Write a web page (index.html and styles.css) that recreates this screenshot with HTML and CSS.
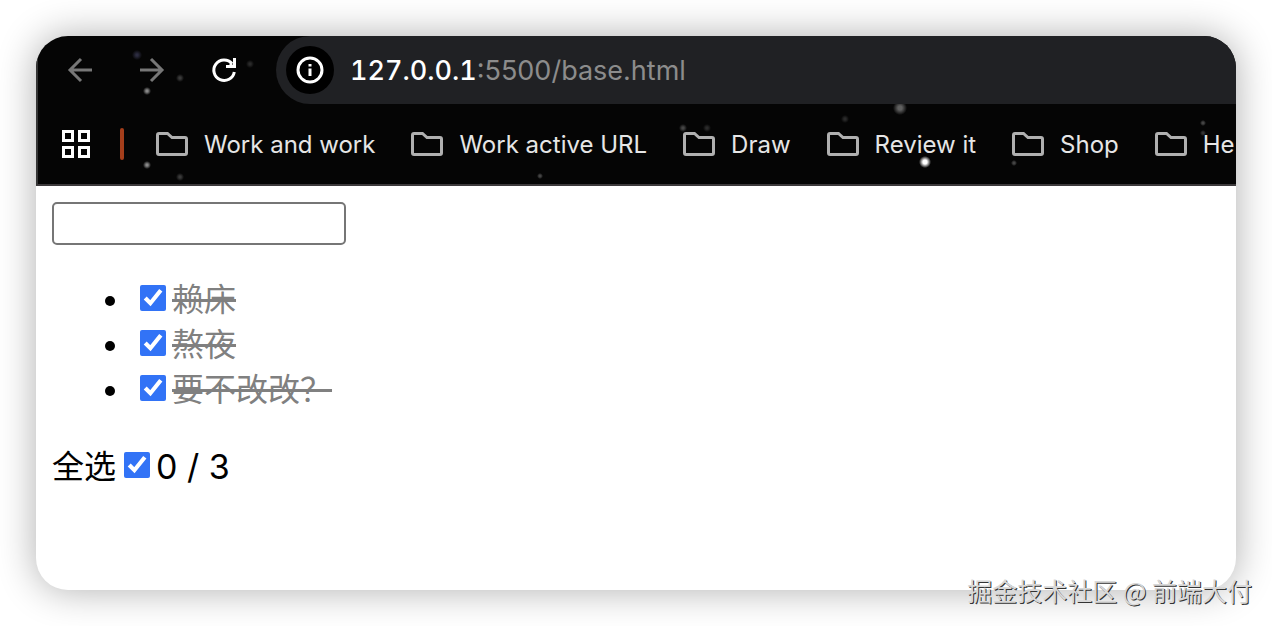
FILE: index.html
```html
<!DOCTYPE html>
<html lang="zh-CN">
<head>
<meta charset="utf-8">
<meta name="viewport" content="width=device-width,initial-scale=1.0">
<title>base</title>
<link rel="stylesheet" href="styles.css">
</head>
<body>
<svg class="defs" width="0" height="0">
	<symbol id="folder" viewBox="0 0 32 24">
		<path d="M3 1.5H11.5L16 5.5H29Q30.5 5.5 30.5 7V21Q30.5 22.5 29 22.5H3Q1.5 22.5 1.5 21V3Q1.5 1.5 3 1.5Z" fill="none" stroke="#b0b0b0" stroke-width="3"/>
	</symbol>
</svg>
<div class="window">
	<div class="chrome">
		<div class="toolbar">
			<button class="nav" type="button" aria-label="后退"><svg viewBox="0 0 24 24"><path d="M24 12H2M13 1L2 12L13 23"/></svg></button>
			<button class="nav" type="button" aria-label="前进"><svg viewBox="0 0 24 24"><path d="M0 12H22M11 1L22 12L11 23"/></svg></button>
			<button class="nav reload" type="button" aria-label="刷新"><svg viewBox="0 0 24 24"><path d="M20 5.5A10.3 10.3 0 1 0 22.3 14M22.5 0V8.5H14M19 4V8"/></svg></button>
			<div class="address">
				<button class="info" type="button" aria-label="网站信息"><svg viewBox="0 0 28 28"><circle cx="14" cy="14" r="12"/><path d="M14 12.5V20M14 8V10.5"/></svg></button>
				<span class="url"><b>127.0.0.1</b>:5500/base.html</span>
			</div>
		</div>
		<div class="bookmarks">
			<button class="apps" type="button" aria-label="应用"><svg viewBox="0 0 28 28"><path d="M1.5 1.5H10.5V10.5H1.5ZM17.5 1.5H26.5V10.5H17.5ZM1.5 17.5H10.5V26.5H1.5ZM17.5 17.5H26.5V26.5H17.5Z"/></svg></button>
			<span class="line"></span>
			<a class="mark" href="#"><svg><use href="#folder"/></svg>Work and work</a>
			<a class="mark" href="#"><svg><use href="#folder"/></svg>Work active URL</a>
			<a class="mark" href="#"><svg><use href="#folder"/></svg>Draw</a>
			<a class="mark" href="#"><svg><use href="#folder"/></svg>Review it</a>
			<a class="mark" href="#"><svg><use href="#folder"/></svg>Shop</a>
			<a class="mark" href="#"><svg><use href="#folder"/></svg>He</a>
		</div>
	</div>
	<div class="page">
		<input class="ipt" type="text" aria-label="新增">
		<ul>
			<li><label><input type="checkbox" checked><span class="done">赖床</span></label></li>
			<li><label><input type="checkbox" checked><span class="done">熬夜</span></label></li>
			<li><label><input type="checkbox" checked><span class="done">要不改改？</span></label></li>
		</ul>
		<div class="total"><label for="all">全选</label><input id="all" type="checkbox" checked><span class="count">0 / 3</span></div>
	</div>
</div>
<div class="watermark">掘金技术社区 @ 前端大付</div>
</body>
</html>
```

FILE: styles.css
```css
* {
	box-sizing:border-box;
}
body {
	margin:0;
	padding:36px;
	min-height:100vh;
	display:flex;
	background:#fff;
	position:relative;
	overflow-x:hidden;
}
.defs {
	position:absolute;
}
.window {
	flex:1;
	min-width:0;
	border-radius:32px;
	overflow:hidden;
	background:#fff;
	box-shadow:0 0 38px rgba(0,0,0,.32);
	font-family:Inter,"Noto Sans CJK SC",sans-serif;
}
button {
	border:none;
	padding:0;
	background:none;
}
button svg {
	display:block;
	width:100%;
	height:100%;
	fill:none;
	overflow:visible;
}

/* browser bar, the dots are the stars of the theme */
.chrome {
	border-left:2px solid #343434;
	border-bottom:2px solid #3c393b;
	background:
		radial-gradient(circle at 887px 126px,#fff 2px,transparent 6px),
		radial-gradient(circle at 862px 72px,#606060 2px,transparent 7px),
		radial-gradient(circle at 109px 55px,#888 1px,transparent 4px),
		radial-gradient(circle at 109px 129px,#888 1px,transparent 4px),
		radial-gradient(circle at 99px 19px,#2c2c40 1px,transparent 5px),
		radial-gradient(circle at 142px 42px,#3a3a3a 1px,transparent 4px),
		radial-gradient(circle at 142px 141px,#3a3a3a 1px,transparent 4px),
		radial-gradient(circle at 212px 28px,#2a2a2a 1px,transparent 4px),
		radial-gradient(circle at 645px 92px,#444 1px,transparent 4px),
		radial-gradient(circle at 669px 92px,#2a2a2a 1px,transparent 4px),
		radial-gradient(circle at 502px 140px,#444 1px,transparent 3px),
		radial-gradient(circle at 807px 83px,#2a2a2a 1px,transparent 4px),
		radial-gradient(circle at 976px 127px,#444 1px,transparent 3px),
		radial-gradient(circle at 1165px 87px,#444 1px,transparent 3px),
		radial-gradient(circle at 1165px 97px,#333 1px,transparent 3px),
		#050505;
}
.toolbar {
	display:flex;
	align-items:center;
	height:68px;
	padding-left:30px;
}
.nav {
	flex:none;
	width:24px;
	height:24px;
	margin-right:48px;
}
.nav path {
	stroke:#777;
	stroke-width:3;
}
.nav.reload {
	margin-right:40px;
}
.reload path {
	stroke:#fff;
}
.address {
	flex:1;
	display:flex;
	align-items:center;
	gap:16px;
	height:68px;
	padding-left:10px;
	border-radius:34px 0 0 34px;
	background:#202124;
}
.info {
	width:48px;
	height:48px;
	padding:10px;
	border-radius:50%;
	background:#000;
}
.info svg {
	stroke:#fff;
	stroke-width:3;
}
.url {
	font-size:27px;
	color:#8c8c8c;
}
.url b {
	font-weight:500;
	font-variant-numeric:tabular-nums;
	color:#fff;
}
.bookmarks {
	display:flex;
	align-items:center;
	height:80px;
	padding-left:24px;
	overflow:hidden;
}
.apps {
	flex:none;
	width:28px;
	height:28px;
}
.apps path {
	stroke:#fff;
	stroke-width:3;
}
.line {
	flex:none;
	width:4px;
	height:32px;
	margin:0 32px 0 30px;
	border-radius:2px;
	background:#a43e1b;
}
.mark {
	flex:none;
	display:flex;
	align-items:center;
	gap:16px;
	margin-right:36px;
	font-size:24px;
	color:#e6e6e6;
	text-decoration:none;
	white-space:nowrap;
}
.mark svg {
	width:32px;
	height:24px;
}

.page {
	padding:16px;
	font-size:32px;
	line-height:45px;
}
.ipt {
	display:block;
	width:294px;
	height:43px;
	padding:2px 4px;
	border:2px solid #767676;
	border-radius:5px;
	outline:none;
	font-size:26px;
}
ul {
	margin:32px 0;
	padding-left:80px;
}
li {
	height:45px;
}
li label,.total {
	display:inline-flex;
	align-items:center;
	height:45px;
	vertical-align:top;
}
input[type=checkbox] {
	width:26px;
	height:26px;
	margin:0 6px 4px 8px;
	accent-color:#3273f6;
}
.done {
	color:#808080;
	text-decoration:line-through;
}
.count {
	font-size:34px;
}

.watermark {
	position:absolute;
	right:20px;
	bottom:18px;
	font:25px/36px "Noto Sans CJK SC",sans-serif;
	color:#d8d8d8;
	text-shadow:1px 1px 0 #333;
}
```
